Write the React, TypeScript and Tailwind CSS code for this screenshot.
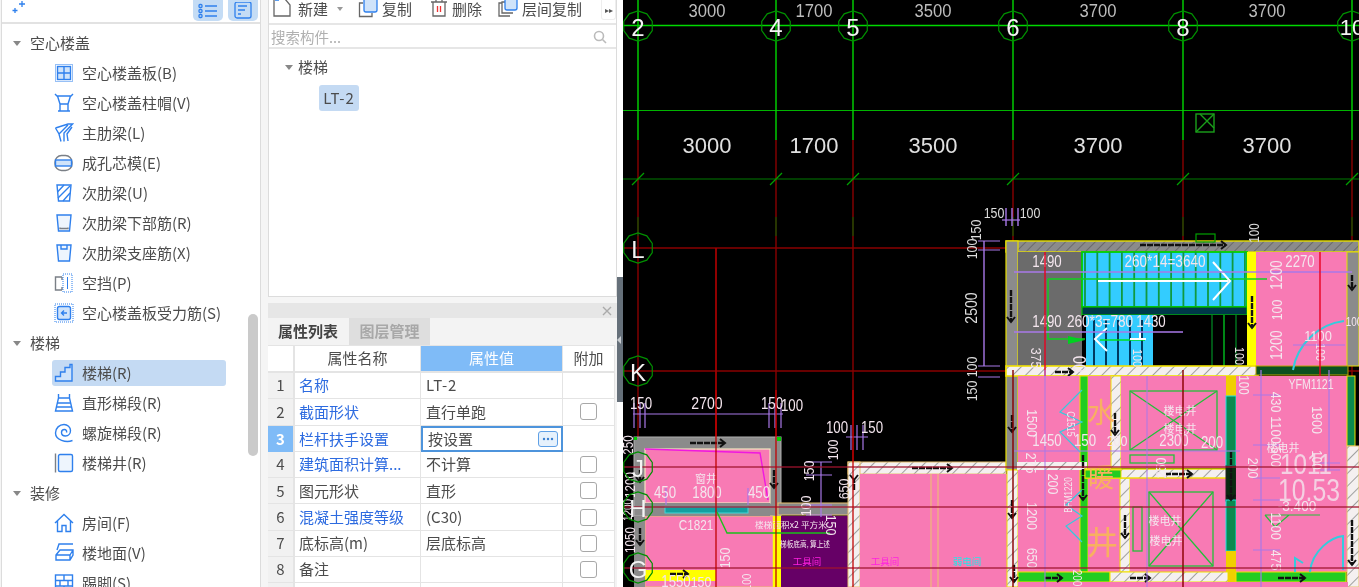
import React from "react";

const B = "#2f80ed";
const G = "#7a7f86";
const F = "#cfe3fa";

function Ic({ children }: { children: React.ReactNode }) {
  return (
    <svg width="20" height="20" viewBox="0 0 20 20" fill="none" stroke={B} strokeWidth="1.4" className="shrink-0">
      {children}
    </svg>
  );
}

const icons: Record<string, React.ReactNode> = {
  slab: (<><rect x="1.500" y="1.500" width="17" height="17" strokeDasharray="1 1" strokeWidth="1" /><rect x="3.500" y="3.500" width="13" height="13" fill={F} /><path d="M10 3.500v13M3.500 10h13" /></>),
  cap: (<path d="M1 1l2 2h14l2-2M3.500 3l2.500 8h8l2.500-8M6 11v7h8v-7M4 18h12" />),
  rib: (<path d="M1.500 5L14 1h4.500L10 10v8.500M1.500 5L5 11l2 7.500M5 11l9-9M14 18l-1-7 5-7" />),
  core: (<><rect x="1" y="2.500" width="17" height="15" rx="6.500" stroke={G} /><rect x="1.500" y="7" width="16" height="6" fill={F} stroke={B} /></>),
  rib2: (<><path d="M3 2h14l-1.500 16h-11z" /><path d="M3.500 9L10 2M4 15L16 3M9 18l7-8" /></>),
  lower: (<><path d="M3 2h14l-1.500 16h-11z" fill="#eef5fd" /><path d="M6 14.500v1h8v-1" stroke={G} /></>),
  upper: (<><path d="M3 2h14l-1.500 16h-11z" fill="#eef5fd" /><path d="M7 2v4h6V2" stroke={B} /></>),
  gap: (<><path d="M8 4H1.500v13H8M8 4v3M8 14v3" stroke={G} /><rect x="9" y="1" width="9" height="18" strokeDasharray="1 1" strokeWidth="1" /><path d="M13.500 4v12" strokeWidth="1" /></>),
  rebar: (<><rect x="1" y="1" width="18" height="18" strokeDasharray="1 1" strokeWidth="1" /><rect x="3.500" y="3.500" width="13" height="13" rx="2" fill={F} /><path d="M13 10H8M10 7.500L7.500 10l2.500 2.500" /></>),
  stair: (<path d="M1.500 18v-4.500h5V9h4.500V4.500h5V1.500h2V18z" fill={F} />),
  flight: (<><path d="M4.500 1v4l-3 13h17l-3-13V1" /><path d="M4.500 5h11M3.500 10h13M2.500 14h15" strokeWidth="1.600" /></>),
  spiral: (<path d="M18.500 17.500C12 20 1.500 17 1.500 10 1.500 5 5.500 1.500 10 1.500c3.500 0 6.500 2.500 6.500 6 0 3-2 5.500-5 5.500-2.500 0-4-1.500-4-3.500S9 6.500 10.500 6.500 13 8 12.500 9.500" />),
  well: (<><rect x="4.500" y="1.500" width="14" height="17" rx="1.500" fill="#eef5fd" /><path d="M1.500 0.500v19" stroke={G} strokeWidth="1.400" /></>),
  house: (<path d="M1 10L10 1.500 19 10M3.500 8v10.500h4.500V12.500h4v6h4.500V8" />),
  floor: (<><path d="M3 7l2-6h14M2 12l4-5h13v5l-3 5H2zM2 12h14v5M16 12l3-5" /></>),
  brick: (<><rect x="1.500" y="2" width="17" height="16" /><path d="M1.500 7.500h17M1.500 13h17M10 2v5.500M6 7.500V13M14 7.500V13M10 13v5" /></>),
};

function Group({ name }: { name: string }) {
  return (
    <div className="flex h-[30px] items-center pl-[11px] text-[15px] text-[#4c4c4c]">
      <span className="mr-[9px] h-0 w-0 border-x-[4px] border-t-[5px] border-x-transparent border-t-[#888]" />
      {name}
    </div>
  );
}

function Item({ icon, name, sel }: { icon: string; name: string; sel?: boolean }) {
  return (
    <div className="ml-[50px] flex h-[30px] w-[174px] items-center">
      <div className={`flex h-[26px] w-full items-center rounded-[3px] pl-[2px] text-[15px] text-[#4c4c4c] ${sel ? "bg-[#c4daf3]" : ""}`}>
        <Ic>{icons[icon]}</Ic>
        <span className="ml-[8px] whitespace-nowrap">{name}</span>
      </div>
    </div>
  );
}

function Sidebar() {
  return (
    <div className="relative h-full w-[260px] shrink-0 overflow-hidden border-x border-[#dcdcdc] bg-white">
      <div className="flex h-[24px] items-start justify-between border-b-2 border-[#e2e2e2] pl-[9px] pr-[2px]">
        <svg width="16" height="16" viewBox="0 0 16 16" stroke="#2f80ed" strokeWidth="1.300">
          <path d="M11 1v6M8 4h6M4 8v5M1.500 10.500h5" />
        </svg>
        <div className="flex gap-[5px]">
          <div className="flex h-[21px] w-[30px] items-center justify-center rounded-b-[5px] bg-[#c4dcf5]">
            <svg width="20" height="16" viewBox="0 0 20 16" fill="none" stroke="#2f80ed" strokeWidth="1.300">
              <path d="M7 3h12M7 8h12M7 13h12" />
              <rect x="1" y="1.500" width="3" height="3" rx="1" />
              <rect x="1" y="6.500" width="3" height="3" rx="1" />
              <rect x="1" y="11.500" width="3" height="3" rx="1" />
            </svg>
          </div>
          <div className="flex h-[21px] w-[30px] items-center justify-center rounded-b-[5px] bg-[#c4dcf5]">
            <svg width="20" height="18" viewBox="0 0 20 18" fill="none" stroke="#2f80ed" strokeWidth="1.300">
              <rect x="2" y="0" width="16" height="16" rx="2" />
              <path d="M5 4h9M5 8h7M5 12h3" />
            </svg>
          </div>
        </div>
      </div>
      <div className="pt-[4px]">
        <Group name="空心楼盖" />
        <Item icon="slab" name="空心楼盖板(B)" />
        <Item icon="cap" name="空心楼盖柱帽(V)" />
        <Item icon="rib" name="主肋梁(L)" />
        <Item icon="core" name="成孔芯模(E)" />
        <Item icon="rib2" name="次肋梁(U)" />
        <Item icon="lower" name="次肋梁下部筋(R)" />
        <Item icon="upper" name="次肋梁支座筋(X)" />
        <Item icon="gap" name="空挡(P)" />
        <Item icon="rebar" name="空心楼盖板受力筋(S)" />
        <Group name="楼梯" />
        <Item icon="stair" name="楼梯(R)" sel />
        <Item icon="flight" name="直形梯段(R)" />
        <Item icon="spiral" name="螺旋梯段(R)" />
        <Item icon="well" name="楼梯井(R)" />
        <Group name="装修" />
        <Item icon="house" name="房间(F)" />
        <Item icon="floor" name="楼地面(V)" />
        <Item icon="brick" name="踢脚(S)" />
      </div>
      <div className="absolute left-[246px] top-[314px] h-[142px] w-[10px] rounded-[5px] bg-[#cacaca]" />
    </div>
  );
}

function Toolbar() {
  return (
    <div className="flex h-[25px] items-center overflow-hidden border-b-2 border-[#e6e6e6] pl-[3px] text-[15px] leading-[18px] text-[#4c4c4c]">
      <svg width="20" height="20" viewBox="0 0 20 20" fill="none" stroke="#666" strokeWidth="1.300" className="-mt-[8px] shrink-0">
        <path d="M5 1H2v17h16V7l-5-6" />
        <rect x="3" y="0" width="4" height="3" fill="#5b9df0" stroke="none" />
      </svg>
      <span className="-mt-[5px] ml-[6px]">新建</span>
      <span className="-mt-[5px] ml-[9px] h-0 w-0 border-x-[3px] border-t-[4px] border-x-transparent border-t-[#999]" />
      <svg width="20" height="20" viewBox="0 0 20 20" fill="none" strokeWidth="1.300" className="-mt-[8px] ml-[15px] shrink-0">
        <path d="M5 5H1.500v13.500H14V15" stroke="#666" />
        <rect x="6" y="0" width="13" height="14" rx="2" fill="#cfe3fa" stroke="#2f80ed" />
      </svg>
      <span className="-mt-[5px] ml-[4px]">复制</span>
      <svg width="18" height="20" viewBox="0 0 18 20" fill="none" strokeWidth="1.300" className="-mt-[8px] ml-[18px] shrink-0">
        <path d="M1 4h16M3 4v14h12V4M6 4V1h6v3" stroke="#666" />
        <path d="M7.500 8v6M10.500 8v6" stroke="#e33" />
      </svg>
      <span className="-mt-[5px] ml-[4px]">删除</span>
      <svg width="20" height="20" viewBox="0 0 20 20" fill="none" strokeWidth="1.300" className="-mt-[8px] ml-[16px] shrink-0">
        <path d="M4 5H1v13h11M7 4H4v11h11" stroke="#666" />
        <rect x="7" y="0" width="12" height="12" rx="2" fill="#cfe3fa" stroke="#2f80ed" />
      </svg>
      <span className="-mt-[5px] ml-[4px] whitespace-nowrap">层间复制</span>
      <div className="-mt-[3px] ml-[19px] flex h-[20px] w-[15px] shrink-0 items-center justify-center rounded-b-[3px] border-x border-b border-[#eee] text-[8px] leading-none text-[#555]">
        ▸▸
      </div>
    </div>
  );
}

function TopPanel() {
  return (
    <div className="h-[297px] shrink-0 border-x border-b border-[#dcdcdc] bg-white">
      <Toolbar />
      <div className="flex h-[24px] items-center justify-between border-b-2 border-[#e6e6e6] pl-[2px] pr-[9px] pt-[2px] text-[14.500px] text-[#b0b0b0]">
        <span>搜索构件...</span>
        <svg width="14" height="14" viewBox="0 0 14 14" fill="none" stroke="#bbb" strokeWidth="1.600">
          <circle cx="6" cy="6" r="4.500" />
          <path d="M9.500 9.500L13 13" />
        </svg>
      </div>
      <div className="flex h-[30px] items-center pl-[16px] pt-[6px] text-[15px] text-[#4c4c4c]">
        <span className="mr-[5px] h-0 w-0 border-x-[4px] border-t-[5px] border-x-transparent border-t-[#888]" />
        楼梯
      </div>
      <div className="ml-[50px] mt-[6px] flex h-[26px] w-[40px] items-center justify-center rounded-[3px] bg-[#c4daf3] text-[15px] tracking-[1px] text-[#4c4c4c]">
        LT-2
      </div>
    </div>
  );
}

const rows = [
  { n: 1, k: "名称", v: "LT-2", blue: true, c: false },
  { n: 2, k: "截面形状", v: "直行单跑", blue: true, c: true },
  { n: 3, k: "栏杆扶手设置", v: "按设置", blue: true, c: false, active: true },
  { n: 4, k: "建筑面积计算...", v: "不计算", blue: true, c: true },
  { n: 5, k: "图元形状", v: "直形", blue: false, c: true },
  { n: 6, k: "混凝土强度等级", v: "(C30)", blue: true, c: true },
  { n: 7, k: "底标高(m)", v: "层底标高", blue: false, c: true },
  { n: 8, k: "备注", v: "", blue: false, c: true },
  { n: 9, k: "", v: "", blue: false, c: false },
];

function PropPanel() {
  return (
    <div className="mt-[6px] flex-1 overflow-hidden bg-[#f3f3f3] text-[15px] text-[#4c4c4c]">
      <div className="flex h-[15px] items-center justify-end bg-[#e6e6e6] pr-[5px]">
        <svg width="10" height="10" viewBox="0 0 10 10" stroke="#aaa" strokeWidth="1.400">
          <path d="M1 1l8 8M9 1l-8 8" />
        </svg>
      </div>
      <div className="flex h-[27px] font-bold">
        <div className="flex w-[80px] items-center justify-center bg-[#f3f3f3] text-[#444]">属性列表</div>
        <div className="ml-px flex w-[81px] items-center justify-center bg-[#dedede] text-[#a8a8a8]">图层管理</div>
      </div>
      <div className="w-[347px] border-t border-[#e4e4e4] bg-white">
        <div className="grid h-[27px] grid-cols-[27px_126px_142px_52px] border-b-2 border-[#e4e4e4]">
          <div className="border-r-2 border-[#e4e4e4]" />
          <div className="flex items-center justify-center border-r border-[#e4e4e4]">属性名称</div>
          <div className="flex items-center justify-center border-r border-[#e4e4e4] bg-[#7fbbf7] text-white">属性值</div>
          <div className="flex items-center justify-center border-r border-[#e4e4e4]">附加</div>
        </div>
        {rows.map((r) => (
          <div key={r.n} className="grid h-[26.300px] grid-cols-[27px_126px_142px_52px] border-b border-[#e4e4e4]">
            <div className={`flex items-center justify-center border-r-2 border-[#e4e4e4] ${r.active ? "bg-[#7fbbf7] font-bold text-white" : "bg-[#f1f1f1]"}`}>
              {r.n}
            </div>
            <div className={`flex items-center overflow-hidden whitespace-nowrap border-r border-[#e4e4e4] pl-[4px] ${r.blue ? "text-[#2d6be0]" : ""}`}>
              {r.k}
            </div>
            {r.active ? (
              <div className="flex items-center justify-between border-2 border-[#4d94dc] pl-[5px] pr-[3px]">
                {r.v}
                <span className="flex h-[16px] w-[20px] items-center justify-center rounded-[3px] border border-[#5fa0e6] bg-[#e6f1fc]">
                  <svg width="12" height="4" viewBox="0 0 12 4" fill="#3a7fd0">
                    <circle cx="2" cy="2" r="1.200" />
                    <circle cx="6" cy="2" r="1.200" />
                    <circle cx="10" cy="2" r="1.200" />
                  </svg>
                </span>
              </div>
            ) : (
              <div className={`flex items-center border-r border-[#e4e4e4] pl-[5px] ${r.v === "LT-2" ? "tracking-[1px]" : ""}`}>{r.v}</div>
            )}
            <div className="flex items-center justify-center border-r border-[#e4e4e4]">
              {r.c && <span className="h-[17px] w-[17px] rounded-[3px] border border-[#a8a8a8] bg-white" />}
            </div>
          </div>
        ))}
      </div>
    </div>
  );
}

function Splitter() {
  return (
    <div className="flex h-full w-[6px] shrink-0 flex-col bg-white">
      <div className="h-[277px] shrink-0" />
      <div className="flex h-[125px] shrink-0 items-center bg-[#66707a]">
        <span className="h-0 w-0 border-y-[4px] border-r-[4px] border-y-transparent border-r-[#c8ccd0]" />
      </div>
    </div>
  );
}

/* ------------ CAD drawing ------------ */
const PINK = "#f87ab4";
const CJK = "'Noto Sans CJK SC',sans-serif";
const R = (x: number, y: number, w: number, h: number, fill: string, stroke?: string, sw = 1) => (
  <rect x={x} y={y} width={w} height={h} fill={fill} stroke={stroke} strokeWidth={sw} />
);
const L = (x1: number, y1: number, x2: number, y2: number, c: string, w = 1.2, o = 1) => (
  <line x1={x1} y1={y1} x2={x2} y2={y2} stroke={c} strokeWidth={w} opacity={o} />
);
const T = (s: string, x: number, y: number, size: number, opts?: { r?: number; c?: string; f?: string; w?: number; o?: number }) => {
  const ascii = /^[\x00-\x7f]+$/.test(s);
  const w = opts?.w ?? (ascii && size < 20 ? s.length * size * 0.46 : undefined);
  return (
    <text
      x={x}
      y={y}
      fontSize={size}
      fill={opts?.c ?? "#f4e6ee"}
      opacity={opts?.o}
      textAnchor="middle"
      dominantBaseline="central"
      fontFamily={opts?.f ?? "'Liberation Sans','Noto Sans CJK SC',sans-serif"}
      textLength={w}
      lengthAdjust={w ? "spacingAndGlyphs" : undefined}
      transform={opts?.r ? `rotate(${opts.r} ${x} ${y})` : undefined}
    >
      {s}
    </text>
  );
};
const Oct = (x: number, y: number, label: string, size = 24) => {
  const r = 15;
  const pts = Array.from({ length: 10 }, (_, i) => {
    const a = (i * Math.PI * 2) / 10 + Math.PI / 10;
    return `${x + r * Math.cos(a)},${y + r * Math.sin(a)}`;
  }).join(" ");
  return (
    <g>
      <polygon points={pts} fill="none" stroke="#009000" strokeWidth="1.200" />
      {T(label, x, y + 1, size, { c: "#f4f4f4" })}
    </g>
  );
};
const Arrow = (x1: number, y1: number, x2: number, y2: number) => {
  const horiz = y1 === y2;
  const p = horiz ? `${x2 - 5},${y2 - 4} ${x2},${y2} ${x2 - 5},${y2 + 4}` : `${x2 - 4},${y2 - 5} ${x2},${y2} ${x2 + 4},${y2 - 5}`;
  return (
    <g>
      <line x1={x1} y1={y1} x2={x2} y2={y2} stroke="#111" strokeWidth="2.400" strokeDasharray="6 1" />
      <polyline points={p} fill="none" stroke="#111" strokeWidth="2" />
    </g>
  );
};
const XBox = (x: number, y: number, w: number, h: number) => (
  <g stroke="#22c03a" strokeWidth="1.300" fill="none">
    <rect x={x} y={y} width={w} height={h} />
    <path d={`M${x} ${y}L${x + w} ${y + h}M${x + w} ${y}L${x} ${y + h}`} />
  </g>
);
const P = "#a878e8";
const DR = "#8a0000";
const BR = "#c00000";
const HR = "#a0152f";
const TOP = { c: "#bdbdbd", w: 37 };
const BIG = { c: "#e0e0e0" };

function Canvas() {
  const stepLines = [];
  for (let i = 0; i <= 13; i++) stepLines.push(1085 + i * 12.3);
  const lowLines = [1094, 1106, 1118, 1130, 1142];
  return (
    <svg viewBox="623 0 736 587" className="block h-[587px] w-[736px] shrink-0 bg-black">
      <defs>
        <pattern id="hatch" width="9" height="9" patternUnits="userSpaceOnUse" patternTransform="rotate(45)">
          <rect width="9" height="9" fill="#f4f0f0" />
          <line x1="0" y1="0" x2="0" y2="9" stroke="#8a8a8a" strokeWidth="1.600" />
        </pattern>
        <pattern id="hatchg" width="7" height="7" patternUnits="userSpaceOnUse" patternTransform="rotate(45)">
          <rect width="7" height="7" fill="#8b8b8b" />
          <line x1="0" y1="0" x2="0" y2="7" stroke="#6a6a6a" strokeWidth="2" />
        </pattern>
      </defs>

      {/* grid top */}
      {L(623, 25.5, 1359, 25.5, "#00d800", 1.4)}
      {L(623, 110.5, 1359, 110.5, "#00b400", 1.2)}
      {L(623, 179, 1359, 179, "#007a00", 1.2)}
      {[638, 776, 853, 1013, 1183, 1352].map((x) => (
        <g key={x}>
          {L(x, 0, x, 140, "#00d800", 1.4)}
          {L(x, 140, x, 587, DR, 1.4)}
          {L(x - 6, 185, x + 6, 173, "#00a000", 1.2)}
          {L(x, 217, x, 236, "#005a00", 1.2)}
        </g>
      ))}
      {L(623, 248, 1359, 248, DR, 1.6)}
      {L(623, 371, 1359, 371, DR, 1.6)}
      {L(716, 248, 716, 587, "#a00000", 1.8)}
      {T("3000", 707, 10, 19, TOP)}
      {T("1700", 814, 10, 19, TOP)}
      {T("3500", 933, 10, 19, TOP)}
      {T("3700", 1098, 10, 19, TOP)}
      {T("3700", 1267, 10, 19, TOP)}
      {T("3000", 707, 145, 22, BIG)}
      {T("1700", 814, 145, 22, BIG)}
      {T("3500", 933, 145, 22, BIG)}
      {T("3700", 1098, 145, 22, BIG)}
      {T("3700", 1267, 145, 22, BIG)}
      <g stroke="#1aa01a" fill="none" strokeWidth="1.400">
        <rect x="1196" y="114" width="18" height="18" />
        <path d="M1196 132L1214 114M1200 114l14 14" />
      </g>
      {Oct(638, 26, "2")}
      {Oct(776, 26, "4")}
      {Oct(853, 26, "5")}
      {Oct(1013, 26, "6")}
      {Oct(1183, 26, "8")}
      {Oct(1352, 26, "10", 22)}
      {Oct(638, 248, "L")}
      {Oct(638, 371, "K")}

      {/* lower left rooms */}
      {R(634, 437, 147, 79, "#8b8b8b", "#b0b0b0", 1)}
      {R(645, 449, 125, 54, PINK, "#f4e8c0", 1.2)}
      {R(645, 516, 128, 71, PINK, "#e8c070", 1)}
      {R(645, 503, 125, 13, "#8a8a8a")}
      {R(665, 507, 83, 6, "#12a0a0", "#40d8d8", 1)}
      {R(634, 516, 11, 71, "#8b8b8b")}
      {R(773, 516, 8, 71, "#ffff00")}
      {R(781, 516, 67, 71, "#660066")}
      {R(778, 503, 72, 12, "#8a8a8a", "#e8c070", 1)}
      {R(645, 570, 71, 11, "#ffff00")}
      {R(848, 462, 158, 12, "url(#hatch)", "#e8c070", 1)}
      {R(848, 462, 12, 125, "url(#hatch)", "#e8c070", 1)}
      {R(860, 474, 147, 113, PINK)}
      {L(931, 474, 931, 587, "#f0b080", 1.4)}
      {L(938, 474, 938, 587, "#f0b080", 1.4)}
      <polyline points="645,449 760,453 768,500" fill="none" stroke="#f018e0" strokeWidth="1.400" />
      <polyline points="717,512 727,533 830,533" fill="none" stroke="#1ac01a" strokeWidth="1.400" />
      {R(634, 437, 3, 3, "#00d000")}
      {R(777, 437, 4, 4, "#00d000")}
      {Arrow(690, 443, 725, 443)}
      {Arrow(640, 470, 640, 482)}
      {Arrow(774, 470, 774, 488)}
      {Arrow(640, 528, 640, 545)}
      {Arrow(670, 574, 688, 574)}
      {Arrow(912, 468, 952, 468)}
      {Arrow(854, 490, 854, 480)}

      {/* upper right block */}
      {R(1006, 241, 353, 11, "url(#hatchg)", "#e8e000", 1.4)}
      {R(1006, 241, 12, 229, "#8b8b8b", "#e8e000", 1.2)}
      {R(1018, 252, 64, 114, "#6b6b6b")}
      {R(1082, 252, 165, 55, "#33ccff", "#00d000", 1.8)}
      {stepLines.map((x) => <g key={x}>{L(x, 252, x, 307, "#109a40", 1.8)}</g>)}
      {R(1082, 307, 165, 8, "#00384a", "#00c000", 1.2)}
      {R(1082, 315, 165, 51, "#000")}
      {R(1086, 315, 67, 51, "#33ccff")}
      {lowLines.map((x) => <g key={x}>{L(x, 320, x, 366, "#003a60", 2)}</g>)}
      {L(1212, 315, 1212, 366, "#007a20", 1.4)}
      {L(1224, 315, 1224, 366, "#00c020", 1.4)}
      {L(1236, 315, 1236, 366, "#007a20", 1.4)}
      {R(1247, 252, 9, 114, "#ffff00")}
      {R(1256, 252, 91, 114, PINK)}
      {R(1347, 252, 12, 114, "#8b8b8b", "#e8e000", 1)}
      {R(1006, 366, 252, 10, "url(#hatch)", "#f0e000", 1.6)}
      {R(1256, 366, 92, 9, "#0c5020", "#bba000", 1)}
      {L(1048, 279, 1267, 279, "#10d020", 1.4)}
      <polyline points="1048,279 1048,339 1085,339" fill="none" stroke="#10d020" strokeWidth="1.400" />
      {L(1098, 281, 1228, 281, "#ffffff", 2)}
      <polyline points="1213,262 1230,281 1213,300" fill="none" stroke="#fff" strokeWidth="2" />
      <polyline points="1107,328 1095,339 1107,351" fill="none" stroke="#fff" strokeWidth="2" />
      {L(1100, 340, 1145, 340, "#00e020", 1.6)}
      {L(1130, 339, 1146, 339, "#fff", 2)}
      {L(1140, 332, 1140, 339, "#fff", 2)}
      <g fill="#00d020"><polygon points="1068,336 1085,340 1068,344" /></g>
      {Arrow(1011, 290, 1011, 322)}
      {Arrow(1140, 245, 1226, 245)}
      {Arrow(1252, 296, 1252, 328)}
      {Arrow(1352, 275, 1352, 290)}
      {Arrow(1055, 372, 1073, 372)}
      {L(1014, 272, 1352, 272, P, 1.4)}
      {L(1014, 332, 1183, 332, P, 1.4)}
      {L(984, 241, 984, 366, P, 1.4)}
      {L(978, 241, 1000, 241, P, 1)}
      {L(978, 250, 1000, 250, P, 1)}
      {L(978, 366, 1000, 366, P, 1)}
      {L(978, 377, 1000, 377, P, 1)}
      {L(1006, 208, 1006, 226, P, 1.4)}
      {L(1012, 208, 1012, 226, P, 1.4)}
      {L(1018, 208, 1018, 226, P, 1.4)}
      {L(1002, 220, 1020, 220, P, 1.2)}
      <g stroke="#00a000" fill="none" strokeWidth="1.200"><rect x="1196" y="234" width="19" height="8" /></g>
      {T("150", 994, 212, 15, { c: "#ddd" })}
      {T("100", 1030, 212, 15, { c: "#ddd" })}
      {T("150", 975, 230, 15, { r: -90, c: "#ddd" })}
      {T("100", 971, 249, 15, { r: -90, c: "#ddd" })}
      {T("2500", 971, 308, 17, { r: -90, c: "#ddd" })}
      {T("100", 971, 367, 15, { r: -90, c: "#ddd" })}
      {T("150", 971, 391, 15, { r: -90, c: "#ddd" })}
      {T("100", 1254, 233, 14, { r: -90, c: "#ddd" })}
      {T("1490", 1047, 261, 16)}
      {T("260*14=3640", 1165, 261, 16)}
      {T("2270", 1300, 261, 16)}
      {T("1490", 1047, 321, 16)}
      {T("260*3=780", 1100, 321, 16)}
      {T("1430", 1151, 321, 16)}
      {T("375", 1036, 358, 15, { r: 90 })}
      {T("00", 1080, 364, 18, { r: -90 })}
      {T("100", 1137, 358, 13, { r: 90 })}
      {T("100", 1239, 356, 13, { r: 90 })}
      {T("1200", 1276, 275, 16, { r: -90 })}
      {T("100", 1276, 310, 15, { r: -90 })}
      {T("1200", 1276, 345, 16, { r: -90 })}
      <path d="M1293 370C1297 345 1318 324 1344 321" fill="none" stroke="#33ccdd" strokeWidth="2" />
      {T("1100", 1318, 335, 15)}
      {T("100", 1320, 352, 13, { r: 90 })}
      {T("100", 1354, 322, 12)}
      {L(1293, 345, 1345, 345, P, 1.2)}
      {L(1045, 252, 1045, 587, "#e80020", 1.4)}
      {L(1320, 252, 1320, 587, "#e80020", 1.4)}

      {/* lower right block */}
      {R(1007, 470, 11, 117, "url(#hatch)", "#f0e000", 1)}
      {R(1018, 376, 62, 211, PINK)}
      {R(1080, 376, 8, 196, "#22cc22", "#f0e000", 1)}
      {R(1088, 376, 23, 94, PINK)}
      {R(1111, 376, 10, 92, "url(#hatch)", "#f0e000", 1)}
      {R(1121, 376, 105, 92, PINK)}
      {R(1088, 478, 32, 94, PINK)}
      {R(1120, 478, 10, 94, "url(#hatch)", "#f0e000", 1)}
      {R(1130, 478, 96, 94, PINK)}
      {R(1017, 462, 70, 8, "url(#hatch)")}
      {R(1085, 469, 143, 9, "url(#hatch)", "#f0e000", 1.4)}
      {R(1085, 470, 36, 8, "#22cc22", "#f0e000", 1)}
      {R(1226, 376, 10, 20, "#f0d000")}
      {R(1226, 396, 10, 70, "#0a8a50", "#20e0e0", 1)}
      {R(1226, 466, 10, 35, "#0a2a10", "#222", 1)}
      {R(1226, 500, 10, 51, "#0a8a50", "#20e0e0", 1)}
      {R(1226, 551, 10, 21, "#f0d000")}
      {R(1236, 376, 111, 196, PINK)}
      {R(1347, 376, 8, 70, "#0a8a50", "#f0e000", 1)}
      {R(1347, 446, 12, 141, "url(#hatch)", "#e8c070", 1)}
      {R(1018, 572, 92, 10, "#22cc22", "#f0e000", 1)}
      {R(1110, 572, 118, 10, "url(#hatch)", "#f0e000", 1)}
      {R(1228, 572, 10, 10, "#f0d000")}
      {R(1236, 572, 110, 10, "#22cc22", "#f0e000", 1)}
      {R(1018, 582, 330, 5, PINK)}
      {XBox(1130, 391, 87, 59)}
      {XBox(1149, 492, 64, 74)}
      <g stroke="#22c03a" fill="none" strokeWidth="1.300">
        <rect x="1130" y="455" width="44" height="8" />
        <rect x="1133" y="507" width="9" height="44" />
      </g>
      <path d="M1082 390L1060 412 1082 422 1060 432 1080 452M1082 490L1066 505 1082 516 1066 526 1082 542" fill="none" stroke="#33ccdd" strokeWidth="1.200" />
      <path d="M1295 572V558L1303 563M1310 572C1312 550 1332 537 1343 536V570" fill="none" stroke="#33ccdd" strokeWidth="2" />
      <path d="M1265 515h55M1265 515l10 12 14-12" fill="none" stroke="#22c03a" strokeWidth="1.200" />
      {Arrow(1012, 415, 1012, 432)}
      {Arrow(1083, 455, 1083, 500)}
      {Arrow(1115, 413, 1115, 435)}
      {Arrow(1125, 515, 1125, 538)}
      {Arrow(1165, 474, 1192, 474)}
      {Arrow(1231, 452, 1231, 500)}
      {Arrow(1045, 578, 1062, 578)}
      {Arrow(1130, 578, 1150, 578)}
      {Arrow(1278, 578, 1305, 578)}
      {Arrow(1012, 500, 1012, 518)}
      {Arrow(1014, 565, 1014, 582)}
      {Arrow(1352, 520, 1352, 565)}
      {L(1014, 451, 1240, 451, P, 1.2)}
      {L(1045, 370, 1045, 587, P, 1)}
      {L(1147, 376, 1147, 587, P, 1)}
      {L(1261, 370, 1261, 587, P, 1.2)}
      {L(1329, 370, 1329, 470, P, 1.2)}
      {L(1253, 395, 1280, 395, P, 1)}
      {L(1253, 445, 1280, 445, P, 1)}
      {L(1253, 478, 1280, 478, P, 1)}
      {L(1253, 500, 1280, 500, P, 1)}
      {L(1253, 550, 1280, 550, P, 1)}
      {L(1320, 463, 1340, 463, P, 1)}
      {L(1320, 470, 1340, 470, P, 1)}
      {T("水", 1101, 411, 28, { c: "#f8b060", f: CJK })}
      {T("暖", 1101, 475, 26, { c: "#f8b060", f: CJK })}
      {T("井", 1102, 540, 32, { c: "#f8b060", f: CJK })}
      {T("1500", 1032, 423, 15, { r: 90 })}
      {T("275", 1031, 463, 15, { r: 90 })}
      {T("200", 1053, 484, 15, { r: 90 })}
      {T("1200", 1032, 516, 15, { r: 90 })}
      {T("650", 1032, 558, 15, { r: 90 })}
      {T("BFM1220", 1068, 495, 11, { r: -90 })}
      {T("C1515", 1071, 424, 11, { r: 90 })}
      {T("1450", 1047, 440, 16)}
      {T("150", 1085, 440, 16)}
      {T("200", 1117, 440, 15)}
      {T("2300", 1174, 440, 16)}
      {T("200", 1212, 442, 16)}
      {T("250", 1160, 468, 15, { r: -90 })}
      {T("200", 1253, 468, 15, { r: 90 })}
      {T("100", 1244, 385, 14, { r: 90 })}
      {T("430", 1276, 402, 15, { r: 90 })}
      {T("1100", 1276, 430, 15, { r: 90 })}
      {T("500", 1276, 457, 15, { r: 90 })}
      {T("1100", 1276, 526, 15, { r: 90 })}
      {T("475", 1276, 560, 15, { r: 90 })}
      {T("1900", 1317, 420, 15, { r: 90 })}
      {T("100", 1317, 460, 14, { r: 90 })}
      {T("YFM1121", 1311, 384, 14)}
      {T("1011", 1306, 463, 30, { w: 52, o: 0.8 })}
      {T("10.53", 1309, 490, 31, { w: 62, o: 0.8 })}
      {T("-3.400", 1297, 506, 14)}
      {T("楼电井", 1180, 410, 11, { f: CJK })}
      {T("楼电井", 1180, 428, 11, { f: CJK })}
      {T("楼电井", 1165, 520, 11, { f: CJK })}
      {T("楼电井", 1166, 540, 11, { f: CJK })}
      {T("楼电井", 1283, 447, 11, { f: CJK })}

      {/* lower left labels */}
      {L(633, 414, 783, 414, P, 1.2)}
      {[634, 640, 645, 769, 775, 781].map((x) => <g key={x}>{L(x, 403, x, 428, P, 1.2)}</g>)}
      {[851, 857, 863].map((x) => <g key={x}>{L(x, 425, x, 450, P, 1.2)}</g>)}
      {L(846, 437, 868, 437, P, 1)}
      {L(821, 462, 821, 517, P, 1.2)}
      {L(806, 462, 832, 462, P, 1)}
      {L(806, 475, 832, 475, P, 1)}
      {L(806, 505, 832, 505, P, 1)}
      {L(806, 515, 832, 515, P, 1)}
      <path d="M666 505v-17M748 505v-17" stroke={P} strokeWidth="1.200" />
      {T("150", 641, 403, 16)}
      {T("2700", 707, 403, 17)}
      {T("150", 772, 403, 16)}
      {T("100", 792, 405, 16)}
      {T("100", 837, 427, 16)}
      {T("150", 872, 427, 16)}
      {T("100", 832, 450, 15, { r: -90 })}
      {T("150", 808, 471, 15, { r: -90 })}
      {T("650", 843, 489, 15, { r: -90 })}
      {T("100", 805, 506, 15, { r: -90 })}
      {T("150", 831, 525, 15, { r: 90 })}
      {T("450", 665, 492, 16)}
      {T("1800", 707, 492, 16)}
      {T("450", 759, 492, 16)}
      {T("C1821", 696, 524, 15)}
      {T("窗井", 706, 478, 11, { f: CJK })}
      {T("楼梯面积x2 平方米", 791, 524, 8.5, { f: CJK, w: 72 })}
      {T("梯板底高, 算上述", 805, 543, 8.5, { f: CJK, w: 50 })}
      {T("工具间", 807, 561, 9.5, { c: "#ff20e0", f: CJK })}
      {T("工具间", 885, 561, 9.5, { c: "#ff20e0", f: CJK })}
      {T("弱电间", 967, 561, 9.5, { c: "#20e8e8", f: CJK })}
      {T("1550", 676, 581, 16)}
      {T("150", 701, 581, 15)}
      {T("150", 724, 558, 15, { r: -90 })}
      {T("100", 747, 582, 12, { r: -90 })}
      {T("250", 628, 445, 14, { r: -90 })}
      {T("1200", 630, 485, 14, { r: -90 })}
      {T("1050", 630, 540, 14, { r: -90 })}
      {T("1200", 628, 510, 12, { r: -90 })}
      {T("200", 1077, 578, 12, { r: 90 })}

      {/* row lines over rooms */}
      {L(623, 467, 1359, 467, HR, 1.6, 0.85)}
      {L(623, 507, 1359, 507, HR, 1.6, 0.85)}
      {L(623, 568, 1359, 568, HR, 1.6, 0.85)}
      {L(716, 390, 716, 587, "#c00000", 1.6, 0.8)}
      {L(776, 390, 776, 587, BR, 1.6, 0.8)}
      {L(853, 390, 853, 587, BR, 1.6, 0.8)}
      {L(1183, 370, 1183, 587, DR, 1.6, 0.9)}
      {L(1013, 370, 1013, 587, DR, 1.6, 0.9)}
      {Oct(638, 467, "J")}
      {Oct(638, 507, "H")}
      {Oct(638, 568, "G")}
    </svg>
  );
}

export default function App() {
  return (
    <div className="flex h-[587px] w-[1359px] overflow-hidden bg-[#f5f5f5] font-['Noto_Sans_CJK_SC','Noto_Sans',sans-serif] blur-[0.4px]">
      <div className="ml-[1px] h-full">
        <Sidebar />
      </div>
      <div className="ml-[7px] flex h-full w-[349px] shrink-0 flex-col">
        <TopPanel />
        <PropPanel />
      </div>
      <Splitter />
      <Canvas />
    </div>
  );
}
